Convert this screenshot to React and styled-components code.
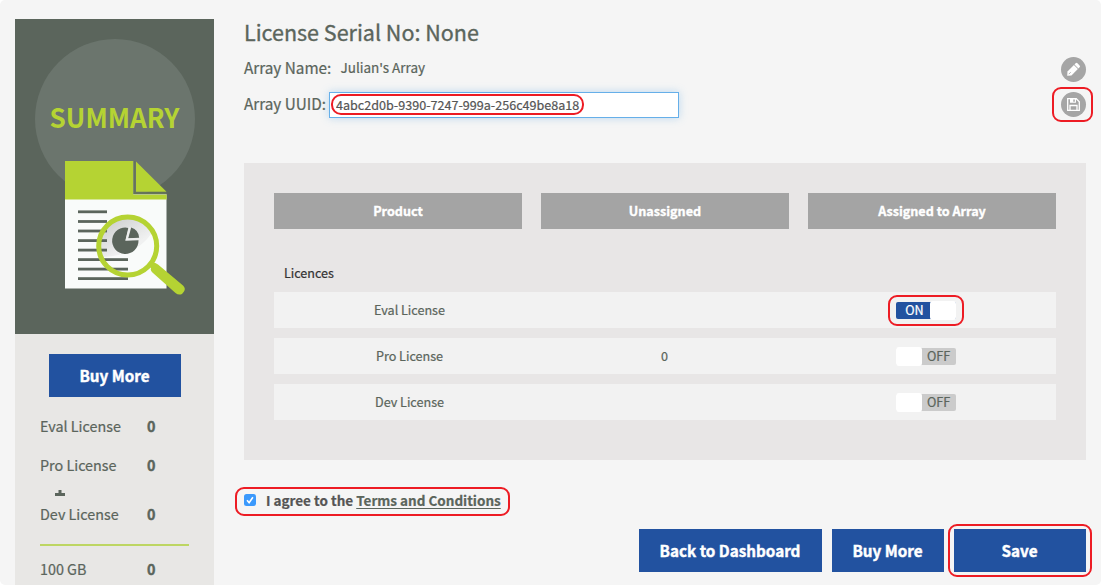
import React, { useState } from "react";
import styled, { createGlobalStyle, css } from "styled-components";

const BLUE = "#2252a0";
const SLATE = "#5b655c";
const LIME = "#b5d333";

const Global = createGlobalStyle`
  html, body { margin: 0; padding: 0; background: #fff; overflow: hidden; }
  *, *::before, *::after { box-sizing: border-box; }
  body, input, button {
    font-family: "Noto Sans CJK SC", "Noto Sans", sans-serif;
    -webkit-text-stroke: 0.22px currentColor;
  }
`;

const Page = styled.div`
  display: flex;
  gap: 30px;
  width: 1101px;
  height: 585px;
  padding: 19px 15px 0;
  overflow: hidden;
  background: #f5f5f5;
  border-radius: 5px;
  color: ${SLATE};
`;

const Sidebar = styled.aside`
  width: 199px;
  flex: none;
  display: flex;
  flex-direction: column;
  background: #e8e7e5;
`;

const Hero = styled.svg`
  display: block;
  flex: none;
  width: 199px;
  height: 315px;
`;

const Button = styled.button`
  width: ${(p) => p.$w}px;
  height: 43px;
  padding: 0 1px 0 0;
  border: 0;
  background: ${BLUE};
  color: #fff;
  font-size: 15.25px;
  font-weight: 700;
  -webkit-text-stroke-width: 0.4px;
  line-height: 43px;
  text-align: center;
  white-space: nowrap;
`;

const SidebarAction = styled.div`
  padding: 20px 34px 0;
  height: 72px;
  flex: none;
`;

const Stat = styled.div`
  display: flex;
  flex: none;
  height: 39px;
  padding-left: 25px;
  font-size: 14.35px;
  line-height: 39px;
  span { width: 107px; white-space: nowrap; }
  b { font-weight: 700; -webkit-text-stroke-width: 0.4px; }
`;

const PlusRow = styled.div`
  height: 10px;
  flex: none;
  padding: 6px 0 0 40px;
  svg { display: block; }
`;

const Divider = styled.hr`
  flex: none;
  width: 149px;
  height: 2px;
  margin: 11px 0 3px 25px;
  border: 0;
  background: #bdd663;
`;

const Main = styled.main`
  width: 842px;
  flex: none;
`;

const Title = styled.h1`
  margin: 0;
  height: 38px;
  font-size: 21.5px;
  font-weight: 400;
  -webkit-text-stroke-width: 0.35px;
  line-height: 26px;
  white-space: nowrap;
`;

const Field = styled.div`
  display: flex;
  align-items: flex-start;
  height: 25px;
  margin-bottom: ${(p) => p.$gap}px;
`;

const Label = styled.label`
  width: ${(p) => p.$w}px;
  font-size: 15.3px;
  line-height: ${(p) => p.$lh}px;
  white-space: nowrap;
`;

const Value = styled.span`
  font-size: 13.5px;
  line-height: 21px;
  white-space: nowrap;
`;

const InputBox = styled.div`
  position: relative;
  width: 350px;
  height: 26px;
`;

const Input = styled.input`
  display: block;
  width: 350px;
  height: 26px;
  padding: 0 6px 2px;
  border: 1px solid #66afe9;
  border-radius: 0;
  outline: 0;
  background: #fff;
  box-shadow: 0 0 8px rgba(102, 175, 233, 0.4);
  color: #555;
  font-size: 12.58px;
`;

const Mark = styled.i`
  position: absolute;
  top: ${(p) => p.$t}px;
  left: ${(p) => p.$l}px;
  width: ${(p) => p.$w}px;
  height: ${(p) => p.$h}px;
  border: 2px solid #ed1c24;
  border-radius: ${(p) => p.$r || 9}px;
  pointer-events: none;
`;

const RoundAction = styled.div`
  position: relative;
  width: 25px;
  height: 25px;
  margin-left: auto;
  border-radius: 50%;
  background: #a5a5a5;
  svg { display: block; }
`;

const Panel = styled.section`
  height: 297px;
  padding: 30px;
  background: #e8e6e6;
`;

const HeadRow = styled.div`
  display: grid;
  grid-template-columns: repeat(3, 248px);
  gap: 19px;
`;

const HeadCell = styled.div`
  height: 36px;
  background: #a4a4a4;
  color: #fff;
  font-size: 12.6px;
  font-weight: 700;
  -webkit-text-stroke-width: 0.35px;
  line-height: 35px;
  text-align: center;
`;

const GroupName = styled.div`
  height: 63px;
  padding: 26px 10px 0;
  color: #333;
  font-size: 12.55px;
  line-height: 36px;
`;

const Row = styled.div`
  display: grid;
  grid-template-columns: 271px 239px 272px;
  height: 36px;
  margin-bottom: 10px;
  background: #f2f2f2;
  font-size: 12.6px;
  line-height: 36px;
  text-align: center;
`;

const ToggleCell = styled.div`
  display: flex;
  align-items: center;
  padding-left: 112px;
`;

const Track = styled.div`
  position: relative;
  display: flex;
  align-items: center;
  width: 60px;
  height: 17px;
  border-radius: 2px;
  font-size: 12.6px;
  line-height: 17px;
  ${(p) =>
    p.$on
      ? css`background: ${BLUE}; color: #fff; justify-content: flex-end;`
      : css`background: #cbcbcb; color: ${SLATE};`}
`;

const TrackText = styled.span`
  width: 34px;
  height: 19px;
  padding-left: ${(p) => (p.$on ? 3 : 0)}px;
  padding-right: ${(p) => (p.$on ? 0 : 1)}px;
  text-align: center;
`;

const Knob = styled.span`
  width: 26px;
  height: 19px;
  flex: none;
  border-radius: 3px;
  background: #fff;
`;

const Agree = styled.div`
  position: relative;
  display: flex;
  align-items: flex-start;
  height: 28px;
  margin: 27px 0 14px;
  font-size: 13.5px;
  font-weight: 700;
  white-space: nowrap;
`;

const Checkbox = styled.svg`
  display: block;
  width: 12px;
  height: 12px;
  margin-top: 7px;
`;

const AgreeText = styled.span`
  margin-left: 10px;
  color: #555;
  line-height: 26px;
`;

const TermsLink = styled.a`
  color: ${SLATE};
  text-decoration: underline;
  text-underline-offset: 2px;
  text-decoration-thickness: 1px;
  text-decoration-skip-ink: none;
`;

const Footer = styled.div`
  display: flex;
  justify-content: flex-end;
  gap: 10px;
`;

const Marked = styled.div`
  position: relative;
`;

function SummaryArt() {
  const lines = [192, 201.7, 211.2, 220.8, 230.3, 239.8, 249.3, 258.8];
  return (
    <Hero viewBox="15 19 199 315">
      <defs>
        <linearGradient id="glass" x1="0" y1="0" x2="0.9" y2="1">
          <stop offset="0" stopColor="#c3c4c5" />
          <stop offset="0.7" stopColor="#f0f1f1" />
        </linearGradient>
        <clipPath id="lens"><circle cx="127.700" cy="246" r="28" /></clipPath>
      </defs>
      <rect x="15" y="19" width="199" height="315" fill="#5b655c" />
      <circle cx="115" cy="119" r="80" fill="#6b756d" />
      <text x="49.500" y="128" fontSize="27" fontWeight="700" fill={LIME} textLength="130" lengthAdjust="spacingAndGlyphs">SUMMARY</text>
      <path d="M65 161h68.500v33h33v94.500H65z" fill="#f9fbfa" />
      <path d="M65 161h68.300v33.500h33.400v5H65z" fill={LIME} />
      <path d="M136 161.500l30.500 30.300H136z" fill={LIME} />
      <path d="M134.300 161v32.200h32.200" fill="none" stroke="#66745a" strokeWidth="2" />
      <g clipPath="url(#lens)">
        <path d="M96 215h62c-3 24-24 43-62 42z" fill="url(#glass)" />
      </g>
      {lines.map((y, i) => (
        <rect key={y} x="78" y={y + 18.400} width={i < 5 ? 29 : 50} height="2.800" fill="#5b655c" />
      ))}
      <path d="M125.300 240.800L128.300 227.900A13.200 13.200 0 1 0 138.500 240.300z" fill="#5b655c" />
      <path d="M128.200 238.200L131.200 227.600Q138.500 230 139.200 237.700z" fill="#5b655c" />
      <path d="M129.700 227.500L126.700 239.400L139.500 239" fill="none" stroke="#eeefef" strokeWidth="1.700" />
      <circle cx="127.700" cy="246" r="29" fill="none" stroke={LIME} strokeWidth="5" />
      <path d="M151.500 262.500Q156 262.500 158 264.500L183 285.500Q186 288.500 184 291.500L182 294Q178.500 295.500 175.500 293L153 273Q150 270.500 151 268L148.500 265.500z" fill={LIME} />
    </Hero>
  );
}

function PencilIcon() {
  return (
    <svg width="25" height="25" viewBox="0 0 25 25">
      <g transform="translate(6.200 18.700) rotate(-45)" fill="#fff">
        <path d="M0 0L3.200-2.800H12.300V2.800H3.200z" />
        <path d="M13.100-2.800h1.600q1.300 0 1.300 1.300v3q0 1.300-1.300 1.300h-1.600z" />
        <path d="M2.200 0H5" stroke="#a5a5a5" strokeWidth=".8" />
      </g>
    </svg>
  );
}

function SaveIcon() {
  return (
    <svg width="25" height="25" viewBox="0 0 25 25" fill="none" stroke="#fff" strokeWidth="1.300">
      <path d="M6.700 6.700h8.600l3 3v8.600H6.700z" />
      <path d="M9 18v-4.500h7V18" />
      <path d="M9 6.500h6v4.200H9z" fill="#fff" stroke="none" />
      <path d="M12.300 7.400h1.500v2.400h-1.500z" fill="#a5a5a5" stroke="none" />
    </svg>
  );
}

function CheckIcon() {
  return (
    <Checkbox viewBox="0 0 12 12">
      <rect width="12" height="12" rx="2.500" fill="#3b99fc" />
      <path d="M3 6.300l2.100 2.300L8.900 3.200" fill="none" stroke="#fff" strokeWidth="1.600" />
    </Checkbox>
  );
}

function Toggle({ on }) {
  return (
    <Track $on={on}>
      {!on && <Knob />}
      <TrackText $on={on}>{on ? "ON" : "OFF"}</TrackText>
      {on && <Knob />}
      {on && <Mark $t={-7} $l={-8} $w={76} $h={31} />}
    </Track>
  );
}

const rows = [
  { name: "Eval License", free: "", on: true },
  { name: "Pro License", free: "0", on: false },
  { name: "Dev License", free: "", on: false },
];

export default function App() {
  const [uuid, setUuid] = useState("4abc2d0b-9390-7247-999a-256c49be8a18");
  return (
    <>
      <Global />
      <Page>
        <Sidebar>
          <SummaryArt />
          <SidebarAction><Button $w={132}>Buy More</Button></SidebarAction>
          <Stat><span>Eval License</span><b>0</b></Stat>
          <Stat><span>Pro License</span><b>0</b></Stat>
          <PlusRow>
            <svg width="10" height="6" viewBox="0 0 10 6"><path d="M3.500 0h3v3H10v3H0V3h3.500z" fill={SLATE} /></svg>
          </PlusRow>
          <Stat><span>Dev License</span><b>0</b></Stat>
          <Divider />
          <Stat><span>100 GB</span><b>0</b></Stat>
        </Sidebar>
        <Main>
          <Title>License Serial No: None</Title>
          <Field $gap={10}>
            <Label $w={96.5} $lh={20}>Array Name:</Label>
            <Value>Julian's Array</Value>
            <RoundAction><PencilIcon /></RoundAction>
          </Field>
          <Field $gap={46}>
            <Label $w={85} $lh={22}>Array UUID:</Label>
            <InputBox>
              <Input value={uuid} onChange={(e) => setUuid(e.target.value)} />
              <Mark $t={2} $l={2} $w={253} $h={21} $r={10} />
            </InputBox>
            <RoundAction>
              <SaveIcon />
              <Mark $t={-5} $l={-9} $w={41} $h={35} />
            </RoundAction>
          </Field>
          <Panel>
            <HeadRow>
              <HeadCell>Product</HeadCell>
              <HeadCell>Unassigned</HeadCell>
              <HeadCell>Assigned to Array</HeadCell>
            </HeadRow>
            <GroupName>Licences</GroupName>
            {rows.map((r) => (
              <Row key={r.name}>
                <div>{r.name}</div>
                <div>{r.free}</div>
                <ToggleCell><Toggle on={r.on} /></ToggleCell>
              </Row>
            ))}
          </Panel>
          <Agree>
            <CheckIcon />
            <AgreeText>I agree to the <TermsLink>Terms and Conditions</TermsLink></AgreeText>
            <Mark $t={0} $l={-9} $w={275} $h={29} />
          </Agree>
          <Footer>
            <Button $w={183}>Back to Dashboard</Button>
            <Button $w={112}>Buy More</Button>
            <Marked>
              <Button $w={132}>Save</Button>
              <Mark $t={-5} $l={-6} $w={144} $h={53} />
            </Marked>
          </Footer>
        </Main>
      </Page>
    </>
  );
}
